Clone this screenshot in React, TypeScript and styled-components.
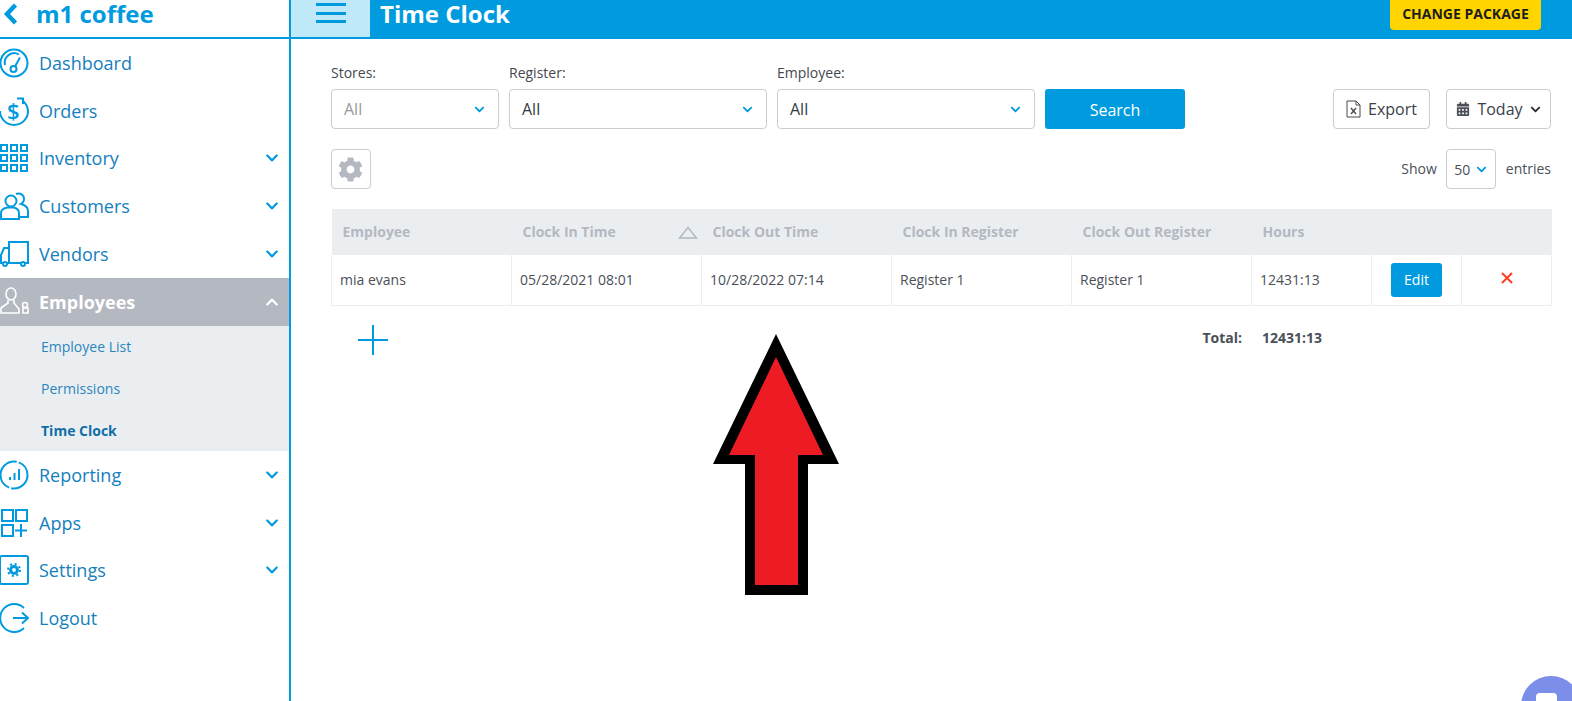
import React from "react";
import styled, { createGlobalStyle } from "styled-components";
import { FaCog, FaCalendarAlt, FaChevronDown, FaChevronUp } from "react-icons/fa";

const BLUE = "#009bde";
const NAVTEXT = "#1580bd";

const Global = createGlobalStyle`
  html, body { margin: 0; padding: 0; background: #fff; }
  body { font-family: "Open Sans", "Liberation Sans", sans-serif; overflow: hidden; }
  * { box-sizing: border-box; }
`;

const Page = styled.div`
  position: relative;
  display: flex;
  width: 1572px;
  height: 701px;
  overflow: hidden;
  background: #fff;
`;

const Sidebar = styled.aside`
  flex: 0 0 291px;
  height: 100%;
  border-right: 2px solid ${BLUE};
  display: flex;
  flex-direction: column;
`;

const Brand = styled.div`
  height: 39px;
  flex: none;
  margin-right: -2px;
  border-bottom: 2px solid ${BLUE};
  display: flex;
  align-items: center;
  padding: 0 0 9px 3px;
  gap: 18px;
  color: ${BLUE};
  font-size: 24px;
  font-weight: 700;
  line-height: 30px;
`;

const BrandBack = styled.svg`
  width: 15px;
  height: 22px;
  flex: none;
  fill: none;
  stroke: ${BLUE};
  stroke-width: 4.5;
`;

const NavRow = styled.div<{ $active?: boolean }>`
  height: 47.8px;
  flex: none;
  display: flex;
  align-items: center;
  gap: 9px;
  padding-right: 10px;
  font-size: 18px;
  color: ${(p) => (p.$active ? "#fff" : NAVTEXT)};
  font-weight: ${(p) => (p.$active ? 700 : 400)};
  background: ${(p) => (p.$active ? "#b4b8c1" : "transparent")};
`;

const NavLabel = styled.span`
  flex: 1;
`;

const NavChevron = styled.span<{ $active?: boolean }>`
  display: flex;
  font-size: 14px;
  color: ${(p) => (p.$active ? "#fff" : BLUE)};
`;

const NavIcon = styled.svg`
  width: 30px;
  height: 30px;
  flex: none;
  fill: none;
  stroke: currentColor;
  stroke-width: 2;
  color: ${BLUE};
`;

const WhiteIcon = styled(NavIcon)`
  color: #fff;
  stroke-width: 1.6;
`;

const DollarText = styled.text`
  font-family: "Open Sans", sans-serif;
  font-size: 22px;
  font-weight: 600;
  fill: ${BLUE};
  stroke: none;
`;

const SubMenu = styled.div`
  background: #ebeef1;
  flex: none;
`;

const SubItem = styled.div<{ $current?: boolean }>`
  height: 41.7px;
  display: flex;
  align-items: center;
  padding-left: 41px;
  font-size: 14px;
  color: ${(p) => (p.$current ? "#0f6fa8" : "#2a86bd")};
  font-weight: ${(p) => (p.$current ? 700 : 400)};
`;

const Main = styled.main`
  flex: 1;
  min-width: 0;
  display: flex;
  flex-direction: column;
`;

const TopBar = styled.header`
  height: 39px;
  flex: none;
  background: ${BLUE};
  display: flex;
  align-items: flex-start;
`;

const Burger = styled.div`
  width: 79px;
  height: 37px;
  flex: none;
  background: #bfe8f8;
  padding: 3px 0 0 25px;
  display: flex;
  flex-direction: column;
  gap: 5.5px;
`;

const BurgerLine = styled.span`
  display: block;
  width: 30px;
  height: 3px;
  background: ${BLUE};
`;

const Title = styled.h1`
  flex: 1;
  margin: -1px 0 0 10px;
  color: #fff;
  font-size: 24px;
  font-weight: 700;
  line-height: 30px;
`;

const Upgrade = styled.button`
  width: 151px;
  height: 34px;
  margin: -4px 31px 0 0;
  border: 0;
  border-radius: 4px;
  background: #ffd500;
  color: #1d1d1d;
  font-family: inherit;
  font-size: 14px;
  font-weight: 700;
  padding: 0;
`;

const Content = styled.div`
  flex: 1;
  padding: 24px 21px 0 40px;
  display: flex;
  flex-direction: column;
`;

const FilterRow = styled.div`
  display: flex;
  align-items: flex-end;
  gap: 10px;
`;

const Field = styled.div<{ $w: number }>`
  width: ${(p) => p.$w}px;
  display: flex;
  flex-direction: column;
  gap: 6px;
`;

const FieldLabel = styled.label`
  font-size: 14px;
  line-height: 20px;
  color: #44484f;
`;

const SelectBox = styled.div<{ $muted?: boolean }>`
  height: 40px;
  border: 1px solid #ccc;
  border-radius: 4px;
  background: #fff;
  display: flex;
  align-items: center;
  justify-content: space-between;
  padding: 0 13px 0 12px;
  font-size: 16px;
  color: ${(p) => (p.$muted ? "#999" : "#333a45")};
`;

const SelectChevron = styled.span`
  display: flex;
  font-size: 11px;
  color: ${BLUE};
`;

const SearchBtn = styled.button`
  width: 140px;
  height: 40px;
  border: 0;
  border-radius: 3px;
  background: ${BLUE};
  color: #fff;
  font-family: inherit;
  font-size: 16px;
  padding: 2px 0 0;
`;

const RightTools = styled.div`
  margin-left: auto;
  display: flex;
  gap: 16px;
`;

const ToolBtn = styled.div<{ $w: number }>`
  width: ${(p) => p.$w}px;
  height: 40px;
  border: 1px solid #ccc;
  border-radius: 4px;
  display: flex;
  align-items: center;
  justify-content: center;
  gap: 7px;
  font-size: 16px;
  color: #3b404a;
`;

const FileIcon = styled.svg`
  width: 15px;
  height: 18px;
  fill: none;
  stroke: #4a4a4a;
  stroke-width: 1;
`;

const CalIcon = styled(FaCalendarAlt)`
  font-size: 14px;
  color: #4a4f58;
`;

const TodayChevron = styled(FaChevronDown)`
  font-size: 11px;
  color: #2d2d2d;
`;

const SecondRow = styled.div`
  display: flex;
  align-items: center;
  justify-content: space-between;
  margin-top: 20px;
`;

const GearBtn = styled.div`
  width: 40px;
  height: 40px;
  border: 1px solid #ccc;
  border-radius: 4px;
  display: flex;
  align-items: center;
  justify-content: center;
  padding-right: 1px;
  font-size: 25px;
  color: #b4b8c1;
`;

const Entries = styled.div`
  display: flex;
  align-items: center;
  gap: 9px;
  font-size: 14px;
  color: #4a4f58;
`;

const EntriesWord = styled.span`
  margin-bottom: 2px;
`;

const PageSize = styled.div`
  width: 50px;
  height: 40px;
  margin-right: 1px;
  border: 1px solid #ccc;
  border-radius: 4px;
  display: flex;
  align-items: center;
  justify-content: center;
  gap: 6px;
  font-size: 14px;
  color: #4a4f58;
`;

const Table = styled.table`
  width: 1220px;
  margin-top: 20px;
  table-layout: fixed;
  border-collapse: collapse;
  font-size: 14px;
`;

const Th = styled.th`
  position: relative;
  height: 46px;
  padding: 0 0 2px 11px;
  text-align: left;
  background: #ebeef1;
  color: #b4b8c1;
  font-weight: 700;
`;

const SortMark = styled.svg`
  position: absolute;
  right: 4px;
  top: 17px;
  width: 20px;
  height: 13px;
  fill: none;
  stroke: #b4b8c1;
  stroke-width: 1.5;
`;

const Td = styled.td<{ $center?: boolean }>`
  height: 50px;
  padding: 0 0 0 ${(p) => (p.$center ? 0 : 8)}px;
  text-align: ${(p) => (p.$center ? "center" : "left")};
  border: 1px solid #ebeef1;
  border-top: 0;
  color: #4a4f58;
`;

const EditBtn = styled.button`
  width: 51px;
  height: 34px;
  border: 0;
  border-radius: 3px;
  background: ${BLUE};
  color: #fff;
  font-family: inherit;
  font-size: 14px;
  padding: 0;
  vertical-align: middle;
`;

const RemoveIcon = styled.svg`
  width: 12px;
  height: 12px;
  margin-bottom: 6px;
  stroke: #ff3d1f;
  stroke-width: 2;
  vertical-align: middle;
`;

const FooterRow = styled.div`
  display: flex;
  align-items: center;
  justify-content: space-between;
  margin-top: 19px;
  padding-left: 27px;
`;

const PlusIcon = styled.svg`
  width: 30px;
  height: 30px;
  stroke: ${BLUE};
  stroke-width: 2;
`;

const Totals = styled.div`
  display: flex;
  gap: 20px;
  margin-bottom: 4px;
  font-size: 14px;
  font-weight: 700;
  color: #4a4f58;
`;

const TotalValue = styled.span`
  width: 289px;
`;

const BigArrow = styled.svg`
  position: absolute;
  left: 713px;
  top: 334px;
  width: 126px;
  height: 261px;
`;

const ChatBubble = styled.div`
  position: absolute;
  left: 1521px;
  top: 676px;
  width: 60px;
  height: 60px;
  border-radius: 50%;
  background: #7b8fe8;
`;

const ChatGlyph = styled.span`
  position: absolute;
  left: 15px;
  top: 17px;
  width: 21px;
  height: 20px;
  border-radius: 4px;
  background: #fff;
`;

const Dashboard = () => (
  <NavIcon viewBox="0 0 30 30">
    <circle cx="14" cy="15" r="13.5" />
    <path d="M5 17a9.5 9.5 0 0 1 14-10.5" />
    <circle cx="13.5" cy="21" r="3" />
    <path d="M15 18.5 L20 9.5" />
  </NavIcon>
);
const Orders = () => (
  <NavIcon viewBox="0 0 30 30">
    <path d="M0 15 A14 14 0 0 0 28 15 A14 14 0 0 0 23 5" />
    <path d="M17 2.5 H23 V8" />
    <DollarText x="7" y="23">$</DollarText>
  </NavIcon>
);
const Inventory = () => (
  <NavIcon viewBox="0 0 30 30">
    {[0, 10, 20].flatMap((y) =>
      [1, 11, 21].map((x) => <rect key={`${x}-${y}`} x={x} y={y + 2} width="6" height="6" />)
    )}
  </NavIcon>
);
const Customers = () => (
  <NavIcon viewBox="0 0 30 30">
    <circle cx="11" cy="10" r="5.5" />
    <path d="M1 28 V22 Q1 18 7 16.5 H14 Q19 18 19 22 V28 Z" />
    <path d="M16 3 A5.5 5.5 0 1 1 21 13 Q28 15 28 20 V26 H20" />
  </NavIcon>
);
const Vendors = () => (
  <NavIcon viewBox="0 0 30 30">
    <path d="M9 24 V3 H28 V24 H25 M21 24 H9" />
    <path d="M9 9 H4 L1 16 V24 H3 M7 24 H9" />
    <circle cx="5" cy="25" r="2" />
    <circle cx="23" cy="25" r="2" />
  </NavIcon>
);
const Employees = () => (
  <WhiteIcon viewBox="0 0 30 30">
    <ellipse cx="11" cy="7" rx="5" ry="6" />
    <path d="M8 13 V16 L1 21 V26 H19 V22 L14 16 V13" />
    <circle cx="25" cy="18" r="2.5" />
    <path d="M23 26 V21 H28 V26 Z" />
  </WhiteIcon>
);
const Reporting = () => (
  <NavIcon viewBox="0 0 30 30">
    <circle cx="14" cy="15" r="13.5" strokeDasharray="24 2 40 2 17 2" />
    <path d="M10 20 V17 M14.5 20 V13 M19 20 V9" />
  </NavIcon>
);
const Apps = () => (
  <NavIcon viewBox="0 0 30 30">
    <rect x="2" y="2" width="11" height="11" />
    <rect x="16" y="2" width="11" height="11" />
    <rect x="2" y="17" width="11" height="11" />
    <path d="M21 16 V29 M15 22.5 H27" />
  </NavIcon>
);
const Settings = () => (
  <NavIcon viewBox="0 0 30 30">
    <rect x="0" y="1" width="28" height="28" rx="2" />
    <circle cx="14" cy="15" r="3.4" strokeWidth="3" />
    <circle cx="14" cy="15" r="6" strokeWidth="2" strokeDasharray="2.1 2.6" />
  </NavIcon>
);
const Logout = () => (
  <NavIcon viewBox="0 0 30 30">
    <path d="M24 5 A14 14 0 1 0 24 25" />
    <path d="M13 15 H28 M22 9.5 L28 15 L22 20.5" />
  </NavIcon>
);

type NavEntry = { label: string; Icon: () => React.ReactElement; more?: boolean };

const nav: NavEntry[] = [
  { label: "Dashboard", Icon: Dashboard },
  { label: "Orders", Icon: Orders },
  { label: "Inventory", Icon: Inventory, more: true },
  { label: "Customers", Icon: Customers, more: true },
  { label: "Vendors", Icon: Vendors, more: true },
];
const navBottom: NavEntry[] = [
  { label: "Reporting", Icon: Reporting, more: true },
  { label: "Apps", Icon: Apps, more: true },
  { label: "Settings", Icon: Settings, more: true },
  { label: "Logout", Icon: Logout },
];

const NavEntryRow = ({ label, Icon, more }: NavEntry) => (
  <NavRow>
    <Icon />
    <NavLabel>{label}</NavLabel>
    {more && (
      <NavChevron>
        <FaChevronDown />
      </NavChevron>
    )}
  </NavRow>
);

const Dropdown = ({ label, w, muted }: { label: string; w: number; muted?: boolean }) => (
  <Field $w={w}>
    <FieldLabel>{label}</FieldLabel>
    <SelectBox $muted={muted}>
      All
      <SelectChevron>
        <FaChevronDown />
      </SelectChevron>
    </SelectBox>
  </Field>
);

const columns = [180, 190, 190, 180, 180, 120, 90, 90];

export default function App() {
  return (
    <Page>
      <Global />
      <Sidebar>
        <Brand>
          <BrandBack viewBox="0 0 15 22">
            <path d="M12.5 2 L4 11 L12.5 20" />
          </BrandBack>
          m1 coffee
        </Brand>
        {nav.map((n) => (
          <NavEntryRow key={n.label} {...n} />
        ))}
        <NavRow $active>
          <Employees />
          <NavLabel>Employees</NavLabel>
          <NavChevron $active>
            <FaChevronUp />
          </NavChevron>
        </NavRow>
        <SubMenu>
          <SubItem>Employee List</SubItem>
          <SubItem>Permissions</SubItem>
          <SubItem $current>Time Clock</SubItem>
        </SubMenu>
        {navBottom.map((n) => (
          <NavEntryRow key={n.label} {...n} />
        ))}
      </Sidebar>
      <Main>
        <TopBar>
          <Burger>
            <BurgerLine />
            <BurgerLine />
            <BurgerLine />
          </Burger>
          <Title>Time Clock</Title>
          <Upgrade>CHANGE PACKAGE</Upgrade>
        </TopBar>
        <Content>
          <FilterRow>
            <Dropdown label="Stores:" w={168} muted />
            <Dropdown label="Register:" w={258} />
            <Dropdown label="Employee:" w={258} />
            <SearchBtn>Search</SearchBtn>
            <RightTools>
              <ToolBtn $w={97}>
                <FileIcon viewBox="0 0 15 18">
                  <path d="M1 1 H10 L14 5 V17 H1 Z M10 1 V5 H14" />
                  <path d="M5 8 L10 14 M10 8 L5 14" strokeWidth="1.4" />
                </FileIcon>
                Export
              </ToolBtn>
              <ToolBtn $w={105}>
                <CalIcon />
                Today
                <TodayChevron />
              </ToolBtn>
            </RightTools>
          </FilterRow>
          <SecondRow>
            <GearBtn>
              <FaCog />
            </GearBtn>
            <Entries>
              <EntriesWord>Show</EntriesWord>
              <PageSize>
                50
                <SelectChevron>
                  <FaChevronDown />
                </SelectChevron>
              </PageSize>
              <EntriesWord>entries</EntriesWord>
            </Entries>
          </SecondRow>
          <Table>
            <colgroup>
              {columns.map((c, i) => (
                <col key={i} width={c} />
              ))}
            </colgroup>
            <thead>
              <tr>
                <Th>Employee</Th>
                <Th>
                  Clock In Time
                  <SortMark viewBox="0 0 20 13">
                    <path d="M10 1.5 L18.5 12 H1.5 Z" />
                  </SortMark>
                </Th>
                <Th>Clock Out Time</Th>
                <Th>Clock In Register</Th>
                <Th>Clock Out Register</Th>
                <Th>Hours</Th>
                <Th />
                <Th />
              </tr>
            </thead>
            <tbody>
              <tr>
                <Td>mia evans</Td>
                <Td>05/28/2021 08:01</Td>
                <Td>10/28/2022 07:14</Td>
                <Td>Register 1</Td>
                <Td>Register 1</Td>
                <Td>12431:13</Td>
                <Td $center>
                  <EditBtn>Edit</EditBtn>
                </Td>
                <Td $center>
                  <RemoveIcon viewBox="0 0 12 12">
                    <path d="M1 1 L11 11 M11 1 L1 11" />
                  </RemoveIcon>
                </Td>
              </tr>
            </tbody>
          </Table>
          <FooterRow>
            <PlusIcon viewBox="0 0 30 30">
              <path d="M15 0 V30 M0 15 H30" />
            </PlusIcon>
            <Totals>
              <span>Total:</span>
              <TotalValue>12431:13</TotalValue>
            </Totals>
          </FooterRow>
        </Content>
      </Main>
      <BigArrow viewBox="0 0 126 261">
        <polygon points="63,0 126,130 95,130 95,261 32,261 32,130 0,130" fill="#000" />
        <polygon points="63,23 110,121 85,121 85,251 42,251 42,121 16,121" fill="#ed1c24" />
      </BigArrow>
      <ChatBubble>
        <ChatGlyph />
      </ChatBubble>
    </Page>
  );
}
